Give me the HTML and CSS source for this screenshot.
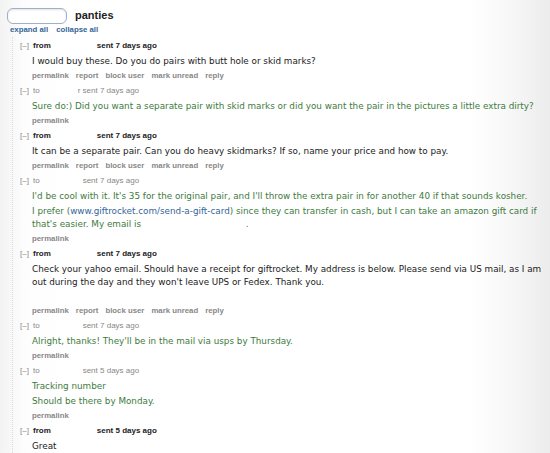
FILE: index.html
```html
<!DOCTYPE html>
<html>
<head>
<meta charset="utf-8">
<link rel="stylesheet" href="styles.css">
</head>
<body>
<div class="page">
  <div class="top">
    <div class="search"></div>
    <div class="title">panties</div>
  </div>
  <div class="toggles"><a>expand all</a><a>collapse all</a></div>
  <div class="thread">
    <div class="msg recv">
      <div class="tagline"><span class="exp">[–]</span><span class="dir">from</span><span class="user u1"></span><span class="when">sent 7 days ago</span></div>
      <div class="md"><p>I would buy these. Do you do pairs with butt hole or skid marks?</p></div>
      <ul class="buttons"><li>permalink</li><li>report</li><li>block user</li><li>mark unread</li><li>reply</li></ul>
    </div>
    <div class="msg sent">
      <div class="tagline"><span class="exp">[–]</span><span class="dir">to</span><span class="user u2"></span><span class="when">r sent 7 days ago</span></div>
      <div class="md"><p>Sure do:) Did you want a separate pair with skid marks or did you want the pair in the pictures a little extra dirty?</p></div>
      <ul class="buttons"><li>permalink</li></ul>
    </div>
    <div class="msg recv">
      <div class="tagline"><span class="exp">[–]</span><span class="dir">from</span><span class="user u1"></span><span class="when">sent 7 days ago</span></div>
      <div class="md"><p>It can be a separate pair. Can you do heavy skidmarks? If so, name your price and how to pay.</p></div>
      <ul class="buttons"><li>permalink</li><li>report</li><li>block user</li><li>mark unread</li><li>reply</li></ul>
    </div>
    <div class="msg sent">
      <div class="tagline"><span class="exp">[–]</span><span class="dir">to</span><span class="user u3"></span><span class="when">sent 7 days ago</span></div>
      <div class="md">
        <p>I'd be cool with it. It's 35 for the original pair, and I'll throw the extra pair in for another 40 if that sounds kosher.</p>
        <p>I prefer (<a>www.giftrocket.com/send-a-gift-card</a>) since they can transfer in cash, but I can take an amazon gift card if that's easier. My email is <span class="redact"></span>.</p>
      </div>
      <ul class="buttons"><li>permalink</li></ul>
    </div>
    <div class="msg recv">
      <div class="tagline"><span class="exp">[–]</span><span class="dir">from</span><span class="user u1"></span><span class="when">sent 7 days ago</span></div>
      <div class="md">
        <p>Check your yahoo email. Should have a receipt for giftrocket. My address is below. Please send via US mail, as I am out during the day and they won't leave UPS or Fedex. Thank you.</p>
        <p class="blank"></p>
      </div>
      <ul class="buttons"><li>permalink</li><li>report</li><li>block user</li><li>mark unread</li><li>reply</li></ul>
    </div>
    <div class="msg sent">
      <div class="tagline"><span class="exp">[–]</span><span class="dir">to</span><span class="user u3"></span><span class="when">sent 7 days ago</span></div>
      <div class="md"><p>Alright, thanks! They'll be in the mail via usps by Thursday.</p></div>
      <ul class="buttons"><li>permalink</li></ul>
    </div>
    <div class="msg sent">
      <div class="tagline"><span class="exp">[–]</span><span class="dir">to</span><span class="user u3"></span><span class="when">sent 5 days ago</span></div>
      <div class="md"><p>Tracking number</p><p>Should be there by Monday.</p></div>
      <ul class="buttons"><li>permalink</li></ul>
    </div>
    <div class="msg recv">
      <div class="tagline"><span class="exp">[–]</span><span class="dir">from</span><span class="user u1"></span><span class="when">sent 5 days ago</span></div>
      <div class="md"><p>Great</p></div>
    </div>
  </div>
</div>
</body>
</html>
```

FILE: styles.css
```css
html, body {
  margin: 0;
  padding: 0;
}
body {
  width: 550px;
  height: 453px;
  overflow: hidden;
  background: linear-gradient(to right, #f3f3f3 0, #fdfdfd 25px, #ffffff 60px, #ffffff 470px, #f7f7f7 510px, #ececec 550px);
  font-family: "Liberation Sans", Arial, sans-serif;
}
.page {
  padding: 7px 0 0 7px;
  width: 543px;
}
.top {
  display: flex;
  align-items: center;
  gap: 8px;
  height: 17px;
}
.search {
  width: 58px;
  height: 14px;
  border: 1px solid #9fb0c9;
  border-radius: 6px;
  background: #fff;
  box-shadow: inset 0 1px 2px rgba(0,0,0,0.12);
}
.title {
  font-weight: bold;
  font-size: 11px;
  color: #222;
  padding-bottom: 1px;
}
.toggles {
  display: flex;
  gap: 8px;
  margin: 1px 0 0 3px;
  font-size: 7.8px;
  font-weight: bold;
  color: #369;
  height: 10px;
}
.thread {
  margin: 2px 0 0 5px;
  border-left: 1px dotted #dcdcdc;
  padding-left: 7px;
}
.msg {
  padding-bottom: 0;
}
.tagline {
  display: flex;
  align-items: baseline;
  font-size: 8px;
  height: 12px;
  line-height: 12px;
  color: #888;
  padding-top: 3px;
}
.exp {
  color: #888;
  width: 13px;
}
.recv .dir, .recv .when {
  color: #222;
  font-weight: bold;
}
.user.u1 { width: 46px; }
.user.u2 { width: 38px; }
.user.u3 { width: 43px; }
.md {
  padding-left: 12px;
  font-family: "DejaVu Sans", Verdana, sans-serif;
  font-size: 8.8px;
  line-height: 13px;
  color: #1a1a1a;
  margin-top: 3px;
}
.sent .md { color: #3d7b3d; }
.md p { margin: 0 0 2px 0; }
.md p:last-child { margin-bottom: 2px; }
.md a { color: #369; }
.md .blank { height: 12px; }
.redact {
  display: inline-block;
  width: 102px;
}
.buttons {
  list-style: none;
  display: flex;
  gap: 7px;
  margin: 0;
  padding: 0 0 0 12px;
  font-size: 7.8px;
  font-weight: bold;
  color: #888;
  height: 12px;
  line-height: 12px;
}
```
